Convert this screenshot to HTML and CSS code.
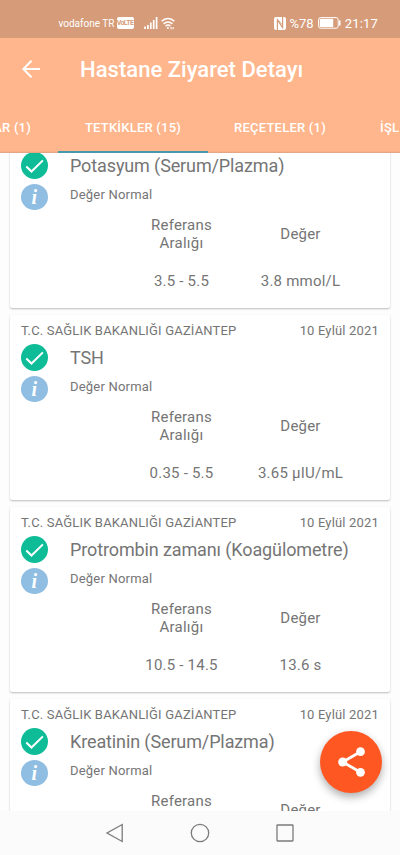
FILE: index.html
```html
<!DOCTYPE html>
<html lang="tr">
<head>
    <meta charset="UTF-8">
    <meta name="viewport" content="width=device-width, initial-scale=1.0">
    <title>Hastane Ziyaret Detayı</title>
    <link rel="stylesheet" href="styles.css">
</head>
<body>
    <svg width="0" height="0" class="defs">
        <symbol id="check" viewBox="0 0 27 27">
            <circle cx="13.5" cy="13.5" r="13.5" fill="#0fbc98"/>
            <path d="M5.3 14.5l5.2 5L21.9 8.4" fill="none" stroke="#fff" stroke-width="2"/>
        </symbol>
        <symbol id="info" viewBox="0 0 27 26">
            <ellipse cx="13.5" cy="13" rx="13.5" ry="13" fill="#8fbee2"/>
            <text x="13.2" y="19.5" class="info-letter">i</text>
        </symbol>
    </svg>

    <div class="status-bar">
        <span class="carrier">vodafone TR</span>
        <span class="volte">VoLTE</span>
        <svg class="signal" width="14" height="12" viewBox="0 0 14 12" stroke="#fff" stroke-width="1.7">
            <path d="M1 12V9.5M3.9 12V8M6.8 12V5.5M9.7 12V3M12.6 12V0"/>
        </svg>
        <svg class="wifi" width="14" height="13" viewBox="0 0 15 13" fill="none" stroke="#fff" stroke-width="1.6">
            <path d="M.7 4.2C4.5.2 10.5.2 14.3 4.2M2.8 6.9C5.5 4.1 9.5 4.1 12.2 6.9M4.9 9.4C6.5 7.8 8.5 7.8 10.1 9.4"/>
            <circle cx="7.4" cy="11.3" r="1.1" fill="#fff" stroke="none"/>
            <path d="M10.8 10.2v2.4M13 10.2v2.4" stroke-width="1.1"/>
        </svg>
        <span class="spacer"></span>
        <svg class="nfc" width="12" height="13" viewBox="0 0 12 13">
            <rect width="12" height="13" rx="2" fill="#fff"/>
            <path d="M3.4 13V3l5.2 7.5V0" fill="none" stroke="#d69c7a" stroke-width="1.2"/>
            <path d="M3.4 2.2L8.600 8" stroke="#d69c7a" stroke-width=".8"/>
        </svg>
        <span class="percent">%78</span>
        <svg class="battery" width="23" height="12" viewBox="0 0 23 12">
            <rect x=".6" y=".6" width="19.6" height="10.6" rx="2" fill="none" stroke="#fff" stroke-width="1"/>
            <rect x="1.8" y="1.8" width="13.4" height="8.2" fill="#fff"/>
            <path d="M21.8 3.5v5" stroke="#fff" stroke-width="1.5"/>
        </svg>
        <span class="clock">21:17</span>
    </div>

    <header class="toolbar">
        <svg width="18" height="18" viewBox="0 0 18 18" fill="none" stroke="#fff" stroke-width="2">
            <path d="M18 9H1.5M9.5.8L1.4 9l8.1 8.2"/>
        </svg>
        <h1>Hastane Ziyaret Detayı</h1>
    </header>
    <nav class="tabs">
        <span class="tab tab-first">AR (1)</span>
        <span class="tab active">TETKİKLER (15)</span>
        <span class="tab">REÇETELER (1)</span>
        <span class="tab tab-last">İŞL</span>
    </nav>

    <main class="list">
        <div class="card">
            <div class="meta"></div>
            <div class="info">
                <div class="icons">
                    <svg width="27" height="27"><use href="#check"/></svg>
                    <svg width="27" height="26"><use href="#info"/></svg>
                </div>
                <div>
                    <h2>Potasyum (Serum/Plazma)</h2>
                    <p>Değer Normal</p>
                </div>
            </div>
            <div class="values">
                <span class="label">Referans Aralığı</span><span>Değer</span>
                <span>3.5 - 5.5</span><span>3.8 mmol/L</span>
            </div>
        </div>

        <div class="card">
            <div class="meta"><span>T.C. SAĞLIK BAKANLIĞI GAZİANTEP</span><span>10 Eylül 2021</span></div>
            <div class="info">
                <div class="icons">
                    <svg width="27" height="27"><use href="#check"/></svg>
                    <svg width="27" height="26"><use href="#info"/></svg>
                </div>
                <div>
                    <h2 class="short">TSH</h2>
                    <p>Değer Normal</p>
                </div>
            </div>
            <div class="values">
                <span class="label">Referans Aralığı</span><span>Değer</span>
                <span>0.35 - 5.5</span><span>3.65 µIU/mL</span>
            </div>
        </div>

        <div class="card">
            <div class="meta"><span>T.C. SAĞLIK BAKANLIĞI GAZİANTEP</span><span>10 Eylül 2021</span></div>
            <div class="info">
                <div class="icons">
                    <svg width="27" height="27"><use href="#check"/></svg>
                    <svg width="27" height="26"><use href="#info"/></svg>
                </div>
                <div>
                    <h2>Protrombin zamanı (Koagülometre)</h2>
                    <p>Değer Normal</p>
                </div>
            </div>
            <div class="values">
                <span class="label">Referans Aralığı</span><span>Değer</span>
                <span>10.5 - 14.5</span><span>13.6 s</span>
            </div>
        </div>

        <div class="card">
            <div class="meta"><span>T.C. SAĞLIK BAKANLIĞI GAZİANTEP</span><span>10 Eylül 2021</span></div>
            <div class="info">
                <div class="icons">
                    <svg width="27" height="27"><use href="#check"/></svg>
                    <svg width="27" height="26"><use href="#info"/></svg>
                </div>
                <div>
                    <h2>Kreatinin (Serum/Plazma)</h2>
                    <p>Değer Normal</p>
                </div>
            </div>
            <div class="values">
                <span class="label">Referans</span><span>Değer</span>
            </div>
        </div>
    </main>

    <button class="share" aria-label="Paylaş">
        <svg width="28" height="30" viewBox="0 0 28 30">
            <path d="M22.5 4.7L4.7 15l17.8 10.3" fill="none" stroke="#fff" stroke-width="2.8"/>
            <circle cx="22.5" cy="4.7" r="4.4" fill="#fff"/>
            <circle cx="4.7" cy="15" r="4.5" fill="#fff"/>
            <circle cx="22.5" cy="25.3" r="4.4" fill="#fff"/>
        </svg>
    </button>

    <footer class="nav-bar">
        <svg width="20" height="20" viewBox="0 0 20 20"><path d="M17.2 1.5v17L2 10z"/></svg>
        <svg width="20" height="20" viewBox="0 0 20 20"><circle cx="10" cy="10" r="8.7"/></svg>
        <svg width="20" height="20" viewBox="0 0 20 20"><rect x="2" y="2" width="16" height="16" rx=".5"/></svg>
    </footer>
</body>
</html>
```

FILE: styles.css
```css
* {
    box-sizing: border-box;
}
body {
    margin: 0;
    height: 855px;
    display: flex;
    flex-direction: column;
    overflow: hidden;
    font-family: Roboto, "Liberation Sans", sans-serif;
    color: #757575;
    background: #fdfdfd;
}
h1, h2, p {
    margin: 0;
    font-weight: 400;
}
.defs {
    position: absolute;
}
.status-bar {
    height: 38px;
    flex: none;
    display: flex;
    align-items: center;
    padding: 8px 22px 0 58.5px;
    background: #d69c7a;
    color: #fff;
}
.carrier {
    font-size: 10px;
    width: 58px;
    white-space: nowrap;
}
.volte {
    width: 17px;
    height: 12px;
    border-radius: 2px;
    background: #fff;
    color: #d69c7a;
    font-size: 7px;
    font-weight: 700;
    line-height: 12px;
    text-align: center;
    letter-spacing: -0.6px;
}
.signal {
    margin-left: 10.5px;
}
.wifi {
    margin-left: 3px;
}
.spacer {
    flex: 1;
}
.percent {
    margin: 0 4px 0 3px;
    font-size: 13px;
}
.clock {
    margin-left: 4px;
    font-size: 13px;
    letter-spacing: 0.2px;
}
.toolbar {
    height: 62px;
    flex: none;
    display: flex;
    align-items: center;
    padding: 0 22px;
    background: #ffb68c;
    color: #fff;
}
.toolbar h1 {
    margin-left: 40px;
    font-size: 22px;
    font-weight: 500;
    letter-spacing: 0.03px;
}
.tabs {
    height: 53px;
    flex: none;
    display: flex;
    overflow: hidden;
    background: linear-gradient(#ffb68c 51px, #dba184 53px);
    color: #fff;
}
.tab {
    height: 53px;
    flex: none;
    width: 144px;
    line-height: 55px;
    font-size: 13px;
    font-weight: 500;
    letter-spacing: 0.22px;
    text-align: center;
    white-space: nowrap;
}
.tab-first {
    width: 58px;
    display: flex;
    justify-content: flex-end;
    padding-right: 27px;
}
.tab.active {
    width: 150px;
    border-bottom: 2px solid #4499ae;
}
.tab-last {
    width: 48px;
    padding-left: 28px;
    text-align: left;
}
.list {
    flex: 1;
    min-height: 0;
    overflow: hidden;
    padding: 0 10px;
}
.card {
    height: 185px;
    margin-bottom: 7px;
    padding: 8px 11px 0;
    border-radius: 2px;
    background: #fff;
    box-shadow: 0 1px 2px rgba(0, 0, 0, 0.26);
}
/* list is scrolled a little, first card slides under the tabs */
.card:first-child {
    margin-top: -30px;
}
.meta {
    display: flex;
    justify-content: space-between;
    height: 21px;
    font-size: 13px;
    letter-spacing: 0.17px;
    line-height: 16px;
}
.info {
    display: flex;
    height: 64px;
}
.icons {
    width: 49px;
    padding-top: 0.3px;
    display: flex;
    flex-direction: column;
    gap: 4.7px;
}
.info-letter {
    font-family: "Liberation Serif", serif;
    font-size: 20px;
    font-weight: 700;
    font-style: italic;
    text-anchor: middle;
    fill: #fff;
}
.info h2 {
    font-size: 18px;
    letter-spacing: -0.12px;
    line-height: 28px;
    white-space: nowrap;
}
.info p {
    font-size: 13px;
    letter-spacing: 0.2px;
    line-height: 16px;
    margin-top: 7px;
}
.values {
    display: grid;
    grid-template-columns: 119px 119px;
    grid-template-rows: 36px 38px;
    margin-left: 101px;
    align-items: center;
    text-align: center;
    font-size: 15px;
    letter-spacing: 0.22px;
    line-height: 18px;
}
.values span:nth-child(n+3) {
    align-self: end;
}
.label {
    height: 36px;
    padding: 0 25px;
}
.share {
    position: absolute;
    left: 320px;
    top: 731px;
    width: 62px;
    height: 62px;
    border: 0;
    border-radius: 50%;
    padding: 0 0 0 1px;
    display: flex;
    align-items: center;
    justify-content: center;
    background: #ff5722;
    box-shadow: 0 4px 8px rgba(0, 0, 0, 0.32);
}
.nav-bar {
    position: relative;
    height: 44px;
    flex: none;
    display: flex;
    justify-content: center;
    align-items: center;
    gap: 65px;
    background: #fbfbfb;
}
.nav-bar svg {
    fill: none;
    stroke: #7b7b7b;
    stroke-width: 1.3;
}
```
